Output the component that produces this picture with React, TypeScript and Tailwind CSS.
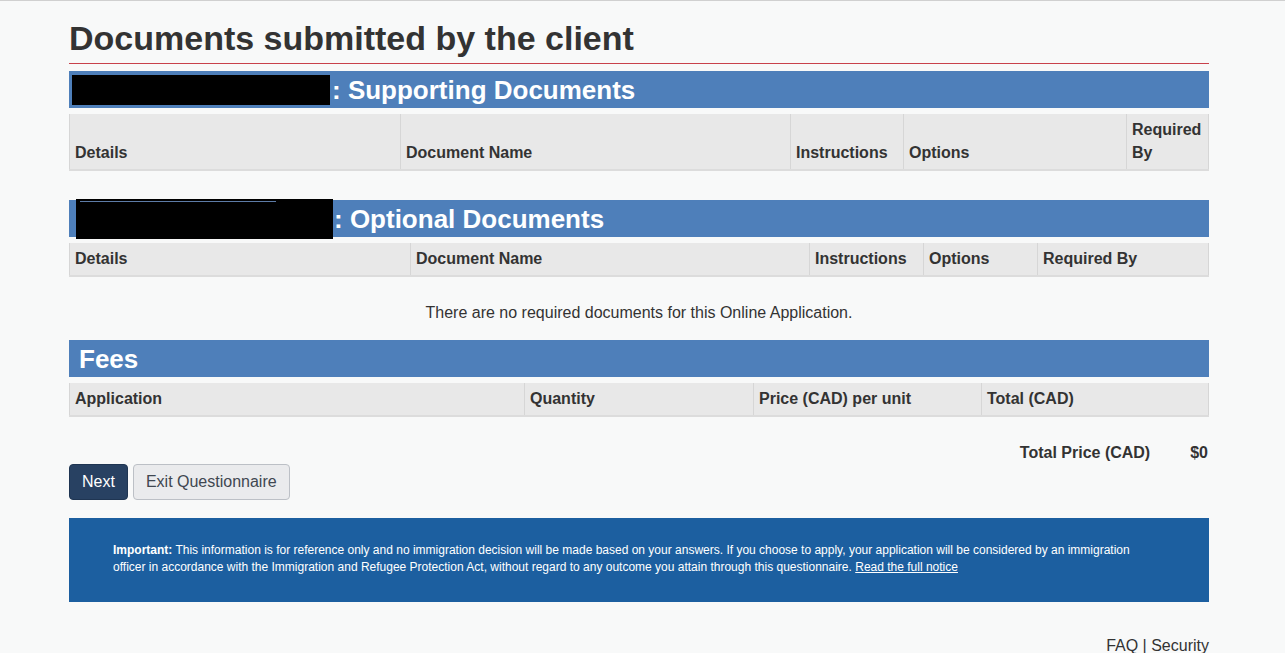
import React from 'react';

interface Col {
    label: string;
    width: number;
}

const supportingCols: Col[] = [
    { label: 'Details', width: 332 },
    { label: 'Document Name', width: 390 },
    { label: 'Instructions', width: 113 },
    { label: 'Options', width: 223 },
    { label: 'Required By', width: 82 },
];

const optionalCols: Col[] = [
    { label: 'Details', width: 342 },
    { label: 'Document Name', width: 399 },
    { label: 'Instructions', width: 114 },
    { label: 'Options', width: 114 },
    { label: 'Required By', width: 171 },
];

const feeCols: Col[] = [
    { label: 'Application', width: 456 },
    { label: 'Quantity', width: 229 },
    { label: 'Price (CAD) per unit', width: 228 },
    { label: 'Total (CAD)', width: 227 },
];

const HeaderRow: React.FC<{ cols: Col[]; tall?: boolean }> = ({ cols, tall }) => (
    <div
        className={`flex bg-[#e8e8e8] border-b-2 border-[#dcdcdc] ${tall ? 'h-[57px]' : 'h-[34px]'}`}
    >
        {cols.map((col, i) => (
            <div
                key={col.label}
                style={{ width: col.width }}
                className={`flex items-end pl-[5px] pr-[6px] pb-[5px] text-[16px] leading-[23px] font-bold text-[#333] border-r border-[#d6d6d6] ${
                    i === 0 ? 'border-l' : ''
                }`}
            >
                <span>{col.label}</span>
            </div>
        ))}
    </div>
);

const SectionBar: React.FC<{ children: React.ReactNode }> = ({ children }) => (
    <div className="flex items-center h-[37px] bg-[#4e7fba] pl-[10px] text-white text-[26px] font-bold leading-none">
        {children}
    </div>
);

export default function App() {
    return (
        <div
            className="min-h-screen bg-[#f8f9f9] border-t border-[#d0d0d0] text-[#333]"
            style={{ fontFamily: '"Liberation Sans", Arial, sans-serif' }}
        >
            <div className="ml-[69px] w-[1140px]">
                <h1 className="mt-[18px] pb-[6px] text-[34px] leading-[38px] font-bold text-[#333]">
                    Documents submitted by the client
                </h1>
                <div className="h-[1px] bg-[#c8414b]" />

                <div className="mt-[7px]">
                    <SectionBar>
                        <span className="inline-block ml-[-7px] w-[258px] h-[30px] bg-black" />
                        <span className="ml-[2px]">: Supporting Documents</span>
                    </SectionBar>
                </div>
                <div className="mt-[6px]">
                    <HeaderRow cols={supportingCols} tall />
                </div>

                <div className="mt-[29px]">
                    <SectionBar>
                        <span className="relative inline-block ml-[-3px] w-[257px] h-[40px] bg-black">
                            <span className="absolute left-[4px] top-[2px] w-[196px] h-[1px] bg-[#5d7ba6]" />
                        </span>
                        <span className="ml-[1px]">: Optional Documents</span>
                    </SectionBar>
                </div>
                <div className="mt-[6px]">
                    <HeaderRow cols={optionalCols} />
                </div>

                <p className="mt-[24px] text-center text-[16px] leading-[23px] text-[#333]">
                    There are no required documents for this Online Application.
                </p>

                <div className="mt-[16px]">
                    <SectionBar>Fees</SectionBar>
                </div>
                <div className="mt-[6px]">
                    <HeaderRow cols={feeCols} />
                </div>

                <div className="mt-[24px] flex justify-end text-[16px] leading-[23px] font-bold text-[#333]">
                    <span>Total Price (CAD)</span>
                    <span className="ml-[40px] mr-[1px]">$0</span>
                </div>

                <div className="flex gap-[5px]">
                    <button className="h-[36px] px-[12px] rounded-[4px] bg-[#284162] border border-[#1f3552] text-white text-[16px]">
                        Next
                    </button>
                    <button className="h-[36px] px-[12px] rounded-[4px] bg-[#eaebed] border border-[#bcc0c6] text-[#3f4751] text-[16px]">
                        Exit Questionnaire
                    </button>
                </div>

                <div className="mt-[18px] h-[84px] bg-[#1c5fa0] pl-[44px] pr-[50px] pt-[24px] text-white text-[12px] leading-[17px]">
                    <p>
                        <strong>Important:</strong> This information is for reference only and no immigration
                        decision will be made based on your answers. If you choose to apply, your application
                        will be considered by an immigration officer in accordance with the Immigration and
                        Refugee Protection Act, without regard to any outcome you attain through this
                        questionnaire. <a className="underline" href="#">Read the full notice</a>
                    </p>
                </div>

                <div className="mt-[32px] text-right text-[16px] leading-[23px] text-[#333]">
                    FAQ | Security
                </div>
            </div>
        </div>
    );
}
